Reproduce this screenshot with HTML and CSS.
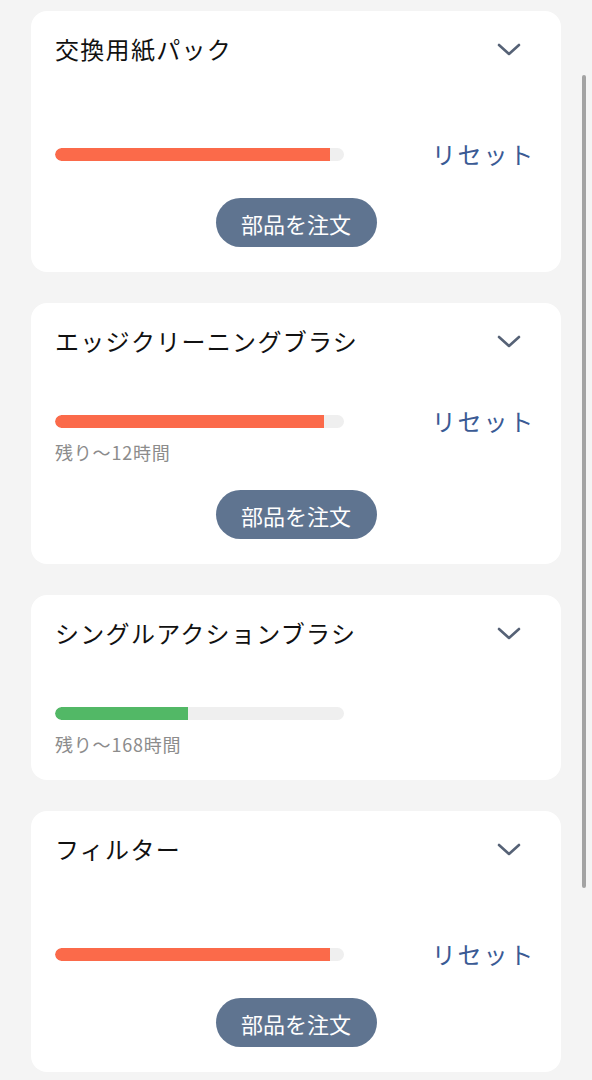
FILE: index.html
```html
<!DOCTYPE html>
<html lang="ja">
<head>
<meta charset="utf-8">
<link rel="stylesheet" href="styles.css">
</head>
<body>
<main class="list">
  <section class="card">
    <div class="card-head">
      <h2 class="title">交換用紙パック</h2>
      <svg class="chev" viewBox="0 0 24 14" width="24" height="14"><path d="M2 2 L12 11 L22 2" /></svg>
    </div>
    <div class="progress">
      <div class="row">
        <div class="bar-wrap"><div class="bar"><div class="fill red" style="width:95.2%"></div></div></div>
        <span class="reset">リセット</span>
      </div>
    </div>
    <button class="order">部品を注文</button>
  </section>

  <section class="card">
    <div class="card-head">
      <h2 class="title">エッジクリーニングブラシ</h2>
      <svg class="chev" viewBox="0 0 24 14" width="24" height="14"><path d="M2 2 L12 11 L22 2" /></svg>
    </div>
    <div class="progress">
      <div class="row">
        <div class="bar-wrap"><div class="bar"><div class="fill red" style="width:93%"></div></div></div>
        <span class="reset">リセット</span>
      </div>
      <div class="remain">残り〜12時間</div>
    </div>
    <button class="order">部品を注文</button>
  </section>

  <section class="card">
    <div class="card-head">
      <h2 class="title">シングルアクションブラシ</h2>
      <svg class="chev" viewBox="0 0 24 14" width="24" height="14"><path d="M2 2 L12 11 L22 2" /></svg>
    </div>
    <div class="progress">
      <div class="row">
        <div class="bar-wrap"><div class="bar"><div class="fill green" style="width:46%"></div></div></div>
      </div>
      <div class="remain">残り〜168時間</div>
    </div>
  </section>

  <section class="card">
    <div class="card-head">
      <h2 class="title">フィルター</h2>
      <svg class="chev" viewBox="0 0 24 14" width="24" height="14"><path d="M2 2 L12 11 L22 2" /></svg>
    </div>
    <div class="progress">
      <div class="row">
        <div class="bar-wrap"><div class="bar"><div class="fill red" style="width:95.2%"></div></div></div>
        <span class="reset">リセット</span>
      </div>
    </div>
    <button class="order">部品を注文</button>
  </section>
</main>
<div class="scroll-thumb"></div>
</body>
</html>
```

FILE: styles.css
```css
html, body {
  margin: 0;
  padding: 0;
  background: #f4f4f4;
  font-family: "Noto Sans CJK JP", "Noto Sans", sans-serif;
  overflow: hidden;
}

.list {
  display: flex;
  flex-direction: column;
  gap: 31px;
  padding: 11px 31px 40px 31px;
}

.card {
  background: #ffffff;
  border-radius: 16px;
  padding: 0 24px 25px 24px;
  display: flex;
  flex-direction: column;
}

.card-head {
  display: flex;
  align-items: center;
  justify-content: space-between;
  padding-top: 24px;
  height: 28px;
}

.title {
  margin: 0;
  font-size: 24px;
  font-weight: 400;
  line-height: 28px;
  color: #111111;
  letter-spacing: 1.3px;
}

.chev {
  margin-right: 16px;
  margin-top: 2px;
}

.chev path {
  fill: none;
  stroke: #566276;
  stroke-width: 2.6;
  stroke-linecap: round;
  stroke-linejoin: round;
}

.progress {
  height: 108px;
  display: flex;
  flex-direction: column;
  justify-content: flex-end;
}

.row {
  display: flex;
  align-items: flex-start;
  justify-content: space-between;
}

.bar-wrap {
  width: 289px;
  height: 34px;
  display: flex;
  align-items: center;
}

.bar {
  width: 100%;
  height: 13px;
  border-radius: 7px;
  background: #efefef;
  overflow: hidden;
}

.fill {
  height: 100%;
  border-radius: 7px 0 0 7px;
}

.fill.red { background: #fb6a4a; }
.fill.green { background: #52b866; }

.reset {
  font-size: 24px;
  font-weight: 400;
  line-height: 34px;
  color: #3a5a94;
  margin-right: 2px;
  letter-spacing: 1.8px;
}

.remain {
  margin-top: 4px;
  font-size: 18px;
  line-height: 21px;
  color: #8c8c8c;
  letter-spacing: 0.8px;
}

.order {
  align-self: center;
  margin-top: 27px;
  width: 161px;
  height: 49px;
  border: none;
  border-radius: 25px;
  background: #5f7490;
  color: #ffffff;
  font-family: "Noto Sans CJK JP", "Noto Sans", sans-serif;
  font-size: 22px;
  font-weight: 400;
  padding: 0;
}

.scroll-thumb {
  position: fixed;
  left: 582px;
  top: 75px;
  width: 4px;
  height: 813px;
  border-radius: 2px;
  background: #a3a3a3;
}
```
